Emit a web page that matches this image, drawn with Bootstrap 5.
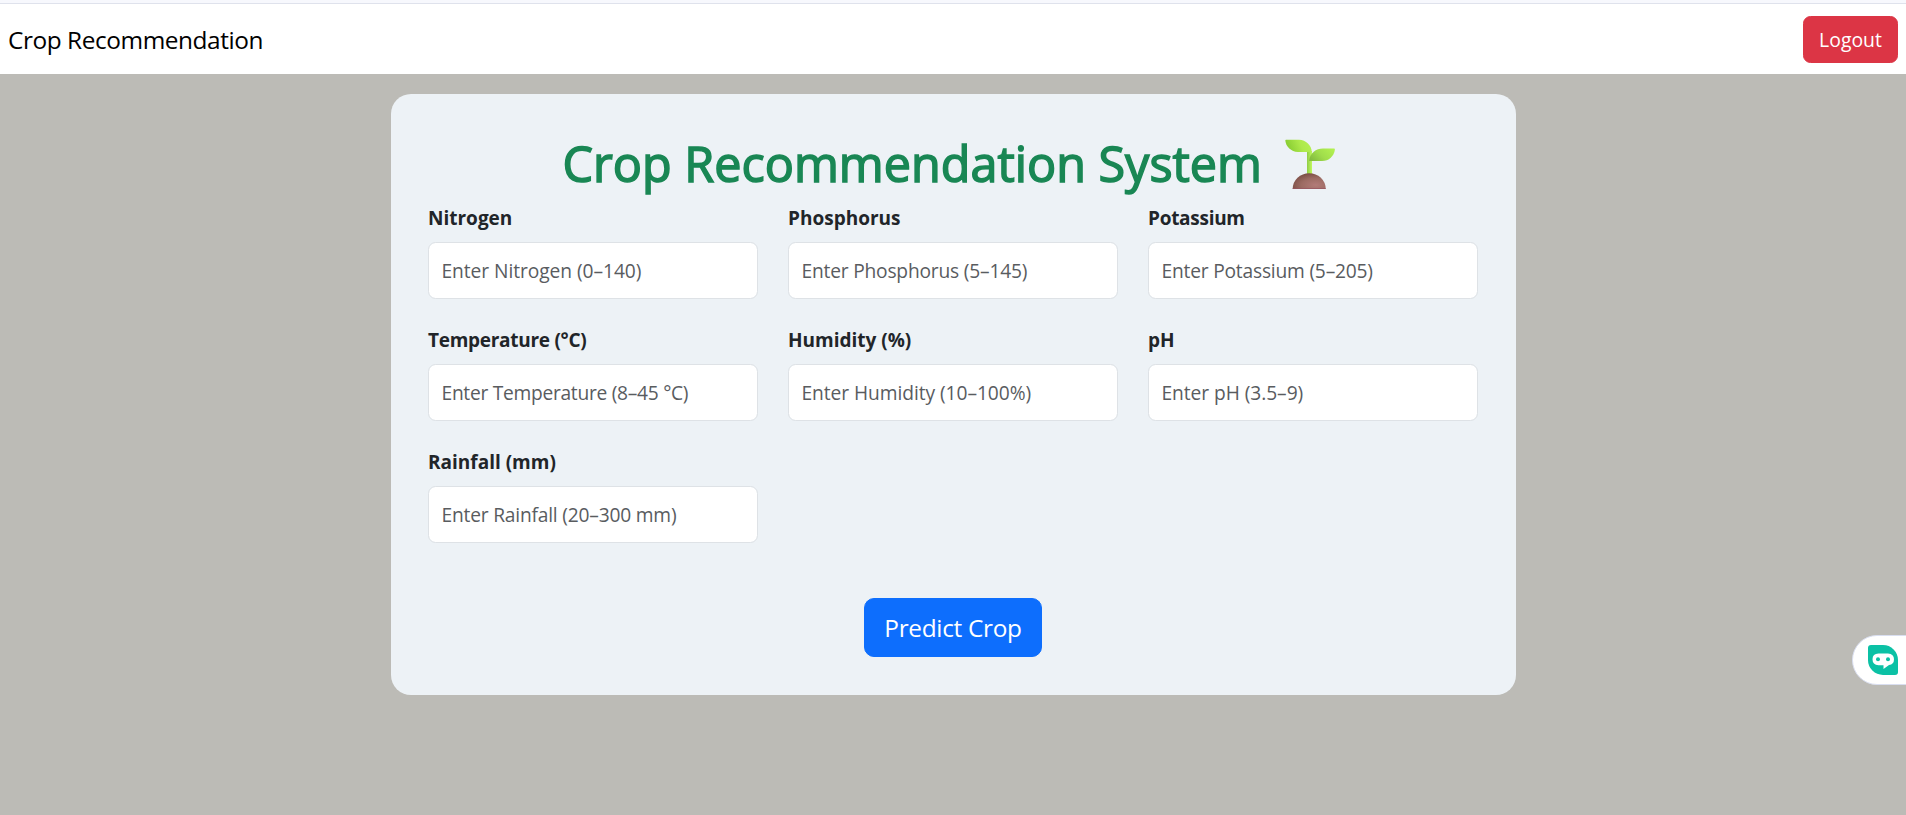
<!DOCTYPE html>
<html lang="en">
<head>
<meta charset="utf-8">
<meta name="viewport" content="width=device-width, initial-scale=1">
<title>Crop Recommendation</title>
<link href="https://cdn.jsdelivr.net/npm/bootstrap@5.3.0/dist/css/bootstrap.min.css" rel="stylesheet">
<style>
html{font-size:20px}
body{font-family:"Open Sans","Noto Sans",sans-serif;background:#bcbbb6;min-height:100vh;overflow:hidden}
.top-strip{height:4px;background:#f7f8fd;border-bottom:1px solid #dfe2ec}
.site-nav{height:70px;padding:0 8px}
.site-nav .navbar-brand{font-size:24.4px;letter-spacing:-.43px;color:#000;margin:0;padding:2px 0 0}
.btn{--bs-btn-border-radius:7.5px}
.btn-out{width:95px;height:47px;padding:2px 0 0;font-size:19.4px}
.crop-panel{width:1125px;height:601px;margin:20px auto 0;padding:37.5px;border-radius:20px;background:#edf2f6}
.crop-title{font-size:48.5px;line-height:58px;height:60px;padding-top:2px;margin-bottom:10px;font-weight:500;white-space:nowrap}
.crop-title .title-text{letter-spacing:.01px;-webkit-text-stroke:1.5px currentColor}
.sprout{width:50px;height:50px;margin:2px 9px 0 22.5px}
.crop-grid{--bs-gutter-x:30px;row-gap:25px}
.form-label{font-size:19px;line-height:30px;padding-top:1px;margin-bottom:9px;font-weight:700;display:block}
.form-control{height:57px;border-radius:7.5px;padding:0 12.5px;font-size:19.2px;letter-spacing:-.2px;border-color:#dee2e6}
.form-control::placeholder{color:#595c5f}
.text-loose{letter-spacing:-.06px}
.text-snug{letter-spacing:-.28px}
.btn-predict{width:178px;height:59px;padding:2px 0 0;font-size:24.4px;letter-spacing:-.3px;border-radius:10px;margin-top:55px}
.chat-tab{top:635px;right:-4px;width:58px;height:50px;border-radius:25px 0 0 25px;background:#fff;border:1px solid #d9def0;padding-left:15px}
</style>
</head>
<body>
<div class="top-strip"></div>
<nav class="site-nav bg-white d-flex justify-content-between align-items-center">
  <a class="navbar-brand" href="#">Crop Recommendation</a>
  <button class="btn btn-danger btn-out" type="button">Logout</button>
</nav>
<main class="crop-panel">
  <h1 class="crop-title text-success d-flex justify-content-center align-items-center"><span class="title-text">Crop Recommendation System</span>
    <svg class="sprout" viewBox="0 0 50 50" aria-hidden="true">
      <defs>
        <linearGradient id="leafA" x1="0" y1=".6" x2="1" y2=".4"><stop offset="0" stop-color="#83c92f"/><stop offset=".6" stop-color="#aee94b"/><stop offset="1" stop-color="#b4f052"/></linearGradient>
        <linearGradient id="leafB" x1="0" y1=".7" x2="1" y2=".2"><stop offset="0" stop-color="#84bd3f"/><stop offset=".45" stop-color="#a0dd4b"/><stop offset="1" stop-color="#b2f050"/></linearGradient>
        <linearGradient id="stem"><stop offset="0" stop-color="#8fcb45"/><stop offset="1" stop-color="#c1fa5f"/></linearGradient>
        <radialGradient id="soil" cx=".7" cy=".75" r=".8"><stop offset="0" stop-color="#b27b78"/><stop offset=".55" stop-color="#9c6b63"/><stop offset="1" stop-color="#794c43"/></radialGradient>
      </defs>
      <path d="M22 12H27V36H22Z" fill="url(#stem)"/>
      <path d="M1 .7H14C21 1 26.500 6 26.800 13H13C6 12.500 1 8 .3 1.500Q.4.7 1 .7Z" fill="url(#leafA)"/>
      <path d="M24 22C25 14 31 9.600 38 9.600H49Q50 9.600 49.900 10.700C49 17 44 22 37 22Z" fill="url(#leafB)"/>
      <path d="M7.700 50A16.500 15.800 0 0 1 40.700 50Z" fill="url(#soil)"/><path d="M7.700 49.200H40.700V50H7.700Z" fill="#985763"/>
    </svg></h1>
  <form>
    <div class="row crop-grid">
      <div class="col-4"><label class="form-label" for="n">Nitrogen</label><input class="form-control text-loose" id="n" placeholder="Enter Nitrogen (0–140)"></div>
      <div class="col-4"><label class="form-label" for="p">Phosphorus</label><input class="form-control" id="p" placeholder="Enter Phosphorus (5–145)"></div>
      <div class="col-4"><label class="form-label text-snug" for="k">Potassium</label><input class="form-control" id="k" placeholder="Enter Potassium (5–205)"></div>
      <div class="col-4"><label class="form-label text-snug" for="t">Temperature (°C)</label><input class="form-control text-snug" id="t" placeholder="Enter Temperature (8–45 °C)"></div>
      <div class="col-4"><label class="form-label" for="h">Humidity (%)</label><input class="form-control text-loose" id="h" placeholder="Enter Humidity (10–100%)"></div>
      <div class="col-4"><label class="form-label" for="ph">pH</label><input class="form-control text-loose" id="ph" placeholder="Enter pH (3.5–9)"></div>
      <div class="col-4"><label class="form-label" for="r">Rainfall (mm)</label><input class="form-control" id="r" placeholder="Enter Rainfall (20–300 mm)"></div>
    </div>
    <div class="text-center"><button class="btn btn-primary btn-predict" type="button">Predict Crop</button></div>
  </form>
</main>
<div class="chat-tab position-fixed d-flex align-items-center">
  <svg width="30" height="30" viewBox="0 0 30 30" aria-hidden="true">
    <path d="M3 0H15A15 15 0 0 1 30 15V27Q30 30 27 30H15A15 15 0 0 1 0 15V3Q0 0 3 0Z" fill="#0bc1a5"/>
    <path d="M10.500 8.500H20Q26 9 26 14.300Q26 19.500 21 20L15.500 24V20.300H10.500Q4.500 20 4.500 14.300Q4.500 8.800 10.500 8.500Z" fill="#fff"/>
    <circle cx="10" cy="14.300" r="2" fill="#0bc1a5"/><circle cx="20" cy="14.300" r="2" fill="#0bc1a5"/>
  </svg>
</div>
<script src="https://cdn.jsdelivr.net/npm/bootstrap@5.3.0/dist/js/bootstrap.bundle.min.js"></script>
</body>
</html>
